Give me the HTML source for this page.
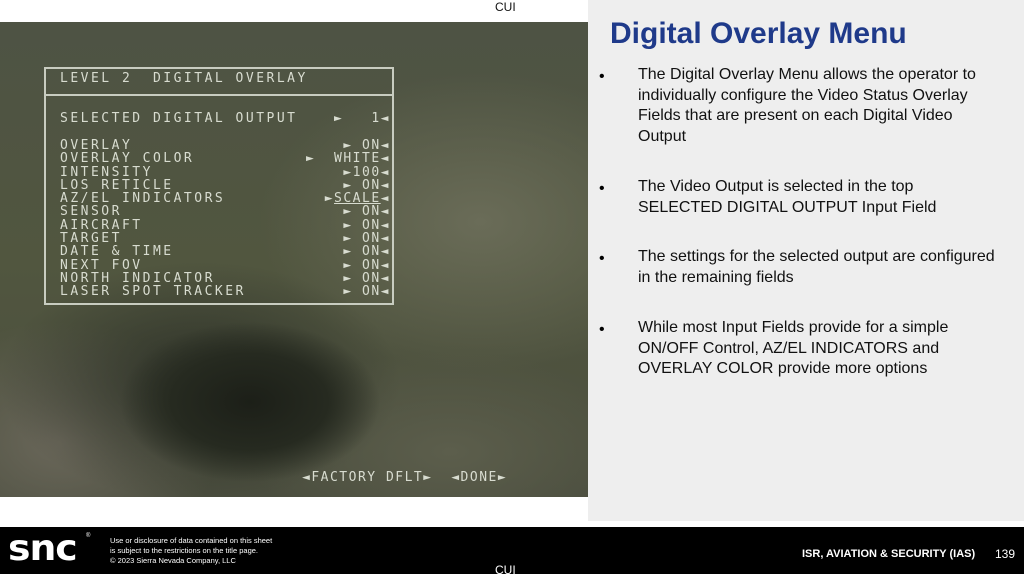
<!DOCTYPE html><html><head><style>
body{margin:0;width:1024px;height:574px;position:relative;overflow:hidden;background:#fff;font-family:"Liberation Sans",sans-serif}
.a{position:absolute}
#img{left:0;top:22px;width:588px;height:475px;background:
radial-gradient(ellipse 130px 80px at 250px 380px,#1c1f18 0%,#262a20 60%,transparent 100%),
radial-gradient(ellipse 200px 120px at 200px 360px,#2e3228 0%,transparent 100%),
radial-gradient(ellipse 220px 150px at 480px 200px,#6a6c58 0%,transparent 100%),
radial-gradient(ellipse 160px 120px at 60px 420px,#6a675a 0%,transparent 100%),
radial-gradient(ellipse 200px 100px at 450px 430px,#5c5e4c 0%,transparent 100%),
linear-gradient(#4e5344,#51563f 50%,#4a4d3e)}
.osd{font-family:"DejaVu Sans Mono","Liberation Mono",monospace;color:#d8dcd0;font-size:13px;letter-spacing:2.5px;line-height:13.3px}
#right{left:588px;top:0;width:436px;height:521px;background:#eeeeee}
h1{position:absolute;left:610px;top:17px;margin:0;font-size:30px;font-weight:bold;color:#1f3a8a;font-family:"Liberation Sans",sans-serif}
.b{position:absolute;left:638px;width:362px;font-size:16px;line-height:20.5px;color:#111}
.d{position:absolute;left:599px;font-size:16px}
#foot{left:0;top:527px;width:1024px;height:47px;background:#000}
</style></head><body>
<div class="a" style="left:495px;top:0;font-size:12px;color:#111">CUI</div>
<div id="img" class="a"></div>
<div class="a" style="left:44px;top:67px;width:346px;height:234px;border:2px solid #c8ccc0"></div>
<div class="a" style="left:44px;top:94px;width:348px;height:2px;background:#c8ccc0"></div>
<div class="a osd" style="left:60px;top:72px">LEVEL 2&nbsp;&nbsp;DIGITAL OVERLAY</div>
<div class="a osd" style="left:60px;top:112px">SELECTED DIGITAL OUTPUT</div>
<div class="a osd" style="left:60px;top:139px">OVERLAY<br>OVERLAY COLOR<br>INTENSITY<br>LOS RETICLE<br>AZ/EL INDICATORS<br>SENSOR<br>AIRCRAFT<br>TARGET<br>DATE &amp; TIME<br>NEXT FOV<br>NORTH INDICATOR<br>LASER SPOT TRACKER</div>
<div class="a osd" style="left:290px;top:112px;width:100px;text-align:right;letter-spacing:1.5px">►&nbsp;&nbsp;&nbsp;1◄</div>
<div class="a osd" style="left:270px;top:139px;width:120px;text-align:right;letter-spacing:1.5px">►&nbsp;ON◄<br>►&nbsp;&nbsp;WHITE◄<br>►100◄<br>►&nbsp;ON◄<br>►<u>SCALE</u>◄<br>►&nbsp;ON◄<br>►&nbsp;ON◄<br>►&nbsp;ON◄<br>►&nbsp;ON◄<br>►&nbsp;ON◄<br>►&nbsp;ON◄<br>►&nbsp;ON◄</div>
<div class="a osd" style="left:302px;top:471px;letter-spacing:1.5px">◄FACTORY DFLT►&nbsp;&nbsp;◄DONE►</div>
<div id="right" class="a"></div>
<h1>Digital Overlay Menu</h1>
<div class="d" style="top:68px">•</div><div class="b" style="top:65px">The Digital Overlay Menu allows the operator to individually configure the Video Status Overlay Fields that are present on each Digital Video Output</div>
<div class="d" style="top:180px">•</div><div class="b" style="top:177px">The Video Output is selected in the top SELECTED DIGITAL OUTPUT Input Field</div>
<div class="d" style="top:250px">•</div><div class="b" style="top:247px">The settings for the selected output are configured in the remaining fields</div>
<div class="d" style="top:321px">•</div><div class="b" style="top:318px">While most Input Fields provide for a simple ON/OFF Control, AZ/EL INDICATORS and OVERLAY COLOR provide more options</div>
<div id="foot" class="a"></div>
<div class="a" style="left:8px;top:528px;color:#fff;font-size:36px;font-weight:bold;font-family:'DejaVu Sans',sans-serif;letter-spacing:-1px;transform:scaleX(1.05);transform-origin:left">snc</div>
<div class="a" style="left:86px;top:533px;color:#fff;font-size:6px">®</div>
<div class="a" style="left:110px;top:536px;color:#fff;font-size:7.5px;line-height:10px">Use or disclosure of data contained on this sheet<br>is subject to the restrictions on the title page.<br>© 2023 Sierra Nevada Company, LLC</div>
<div class="a" style="left:802px;top:548px;color:#fff;font-size:11px;font-weight:bold">ISR, AVIATION &amp; SECURITY (IAS)</div>
<div class="a" style="left:995px;top:547px;color:#fff;font-size:12px">139</div>
<div class="a" style="left:495px;top:563px;color:#fff;font-size:12px">CUI</div>
</body></html>
